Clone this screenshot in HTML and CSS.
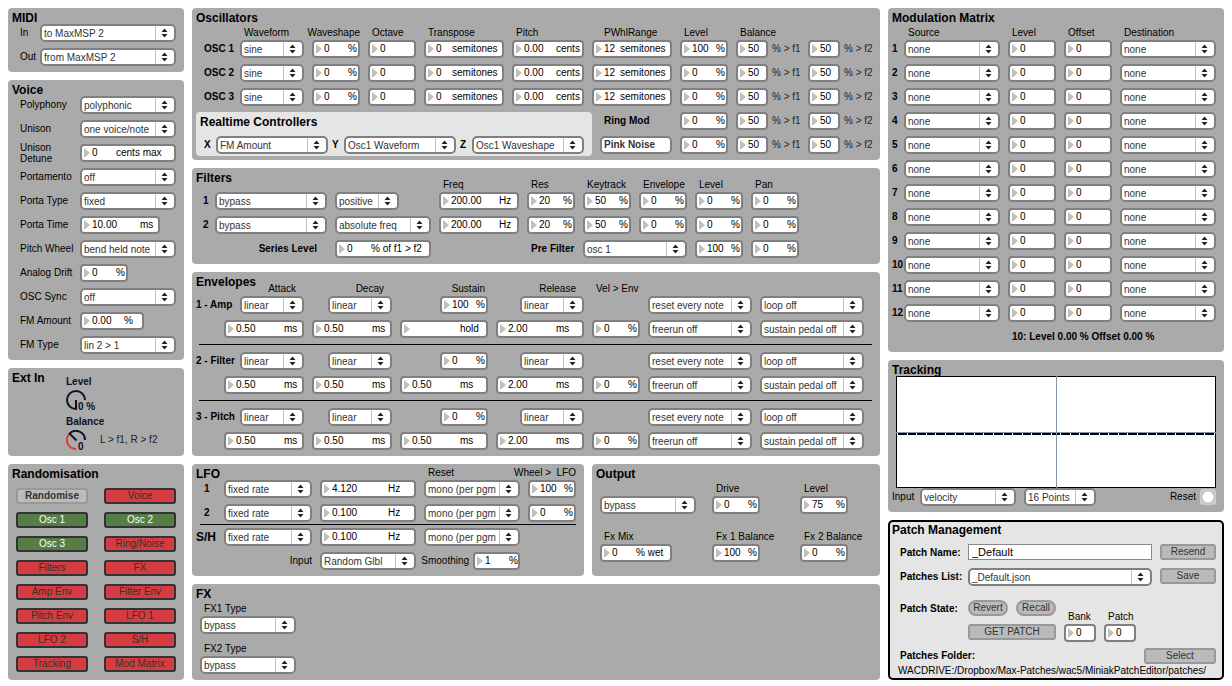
FILE: index.html
```html
<!DOCTYPE html>
<html lang="en">
<head>
<meta charset="utf-8">
<title>Miniak Patch Editor</title>
<link rel="stylesheet" href="styles.css">
</head>
<body>
<main class="editor">

<div class="column">
  <section class="panel">
    <h2>MIDI</h2>
    <div class="body midi">
      <label for="midi-in">In</label><select id="midi-in"><option>to MaxMSP 2</option></select>
      <label for="midi-out">Out</label><select id="midi-out"><option>from MaxMSP 2</option></select>
    </div>
  </section>

  <section class="panel">
    <h2>Voice</h2>
    <div class="body voice">
      <label for="v1">Polyphony</label><select id="v1"><option>polyphonic</option></select>
      <label for="v2">Unison</label><select id="v2"><option>one voice/note</option></select>
      <label for="v3" class="two-line">Unison<br>Detune</label><div class="num u36"><input id="v3" value="0"><span>cents max</span></div>
      <label for="v4">Portamento</label><select id="v4"><option>off</option></select>
      <label for="v5">Porta Type</label><select id="v5"><option>fixed</option></select>
      <label for="v6">Porta Time</label><div class="num u60 w80"><input id="v6" value="10.00"><span>ms</span></div>
      <label for="v7">Pitch Wheel</label><select id="v7"><option>bend held note</option></select>
      <label for="v8">Analog Drift</label><div class="num u36 w48"><input id="v8" value="0"><span>%</span></div>
      <label for="v9">OSC Sync</label><select id="v9"><option>off</option></select>
      <label for="v10">FM Amount</label><div class="num u44 w64"><input id="v10" value="0.00"><span>%</span></div>
      <label for="v11">FM Type</label><select id="v11"><option>lin 2 &gt; 1</option></select>
    </div>
  </section>

  <section class="panel">
    <h2>Ext In</h2>
    <div class="body ext">
      <label for="ext-level">Level</label>
      <div class="dial">
        <svg viewBox="0 0 20 20" width="20" height="20" aria-hidden="true"><path d="M10 10V19A9 9 0 1 1 19 10" fill="none" stroke="#0c1226" stroke-width="2"/></svg>
        <input id="ext-level" type="range" value="0"><output>0 %</output>
      </div>
      <label for="ext-balance">Balance</label>
      <div class="dial">
        <svg viewBox="0 0 20 20" width="20" height="20" aria-hidden="true"><path d="M10 19A9 9 0 0 1 3.6 3.6" fill="none" stroke="#e0383c" stroke-width="2"/><path d="M10.500 10.500L3.600 3.600A9 9 0 0 1 19 10" fill="none" stroke="#0c1226" stroke-width="2"/></svg>
        <input id="ext-balance" type="range" min="-50" max="50" value="0"><output>0</output>
        <span class="route">L &gt; f1, R &gt; f2</span>
      </div>
    </div>
  </section>

  <section class="panel grow">
    <h2>Randomisation</h2>
    <div class="body random">
      <button class="go">Randomise</button><button class="off">Voice</button>
      <button class="on">Osc 1</button><button class="on">Osc 2</button>
      <button class="on">Osc 3</button><button class="off">Ring/Noise</button>
      <button class="off">Filters</button><button class="off">FX</button>
      <button class="off">Amp Env</button><button class="off">Filter Env</button>
      <button class="off">Pitch Env</button><button class="off">LFO 1</button>
      <button class="off">LFO 2</button><button class="off">S/H</button>
      <button class="off">Tracking</button><button class="off">Mod Matrix</button>
    </div>
  </section>
</div>

<div class="column">
  <section class="panel">
    <h2>Oscillators</h2>
    <div class="body osc">
      <span></span><span class="head">Waveform</span><span class="head flush-end">Waveshape</span><span class="head">Octave</span><span class="head">Transpose</span><span class="head">Pitch</span><span class="head indent">PWhlRange</span><span class="head">Level</span><span class="head">Balance</span><span></span>

      <b>OSC 1</b><select aria-label="OSC 1 waveform"><option>sine</option></select>
      <div class="num u36"><input aria-label="OSC 1 waveshape" value="0"><span>%</span></div>
      <div class="num"><input aria-label="OSC 1 octave" value="0"></div>
      <div class="num u28"><input aria-label="OSC 1 transpose" value="0"><span>semitones</span></div>
      <div class="num u44"><input aria-label="OSC 1 pitch" value="0.00"><span>cents</span></div>
      <div class="num u28"><input aria-label="OSC 1 pitch wheel range" value="12"><span>semitones</span></div>
      <div class="num u36"><input aria-label="OSC 1 level" value="100"><span>%</span></div>
      <label class="bal"><span class="num"><input value="50"></span>% &gt; f1</label>
      <label class="bal"><span class="num"><input value="50"></span>% &gt; f2</label>

      <b>OSC 2</b><select aria-label="OSC 2 waveform"><option>sine</option></select>
      <div class="num u36"><input aria-label="OSC 2 waveshape" value="0"><span>%</span></div>
      <div class="num"><input aria-label="OSC 2 octave" value="0"></div>
      <div class="num u28"><input aria-label="OSC 2 transpose" value="0"><span>semitones</span></div>
      <div class="num u44"><input aria-label="OSC 2 pitch" value="0.00"><span>cents</span></div>
      <div class="num u28"><input aria-label="OSC 2 pitch wheel range" value="12"><span>semitones</span></div>
      <div class="num u36"><input aria-label="OSC 2 level" value="0"><span>%</span></div>
      <label class="bal"><span class="num"><input value="50"></span>% &gt; f1</label>
      <label class="bal"><span class="num"><input value="50"></span>% &gt; f2</label>

      <b>OSC 3</b><select aria-label="OSC 3 waveform"><option>sine</option></select>
      <div class="num u36"><input aria-label="OSC 3 waveshape" value="0"><span>%</span></div>
      <div class="num"><input aria-label="OSC 3 octave" value="0"></div>
      <div class="num u28"><input aria-label="OSC 3 transpose" value="0"><span>semitones</span></div>
      <div class="num u44"><input aria-label="OSC 3 pitch" value="0.00"><span>cents</span></div>
      <div class="num u28"><input aria-label="OSC 3 pitch wheel range" value="12"><span>semitones</span></div>
      <div class="num u36"><input aria-label="OSC 3 level" value="0"><span>%</span></div>
      <label class="bal"><span class="num"><input value="50"></span>% &gt; f1</label>
      <label class="bal"><span class="num"><input value="50"></span>% &gt; f2</label>

      <div class="realtime">
        <h3>Realtime Controllers</h3>
        <div class="axes">
          <label for="ax-x">X</label><select id="ax-x"><option>FM Amount</option></select>
          <label for="ax-y">Y</label><select id="ax-y"><option>Osc1 Waveform</option></select>
          <label for="ax-z">Z</label><select id="ax-z"><option>Osc1 Waveshape</option></select>
        </div>
      </div>

      <b class="indent">Ring Mod</b>
      <div class="num u36"><input aria-label="Ring mod level" value="0"><span>%</span></div>
      <label class="bal"><span class="num"><input value="50"></span>% &gt; f1</label>
      <label class="bal"><span class="num"><input value="50"></span>% &gt; f2</label>
      <button class="noise">Pink Noise</button>
      <div class="num u36"><input aria-label="Noise level" value="0"><span>%</span></div>
      <label class="bal"><span class="num"><input value="50"></span>% &gt; f1</label>
      <label class="bal"><span class="num"><input value="50"></span>% &gt; f2</label>
    </div>
  </section>

  <section class="panel">
    <h2>Filters</h2>
    <div class="body filters">
      <span></span><span></span><span></span><span class="head">Freq</span><span class="head">Res</span><span class="head">Keytrack</span><span class="head">Envelope</span><span class="head">Level</span><span class="head">Pan</span>

      <b>1</b><select aria-label="Filter 1 type"><option>bypass</option></select>
      <select aria-label="Filter 1 polarity" class="w64"><option>positive</option></select>
      <div class="num u60"><input aria-label="Filter 1 frequency" value="200.00"><span>Hz</span></div>
      <div class="num u36"><input aria-label="Filter 1 resonance" value="20"><span>%</span></div>
      <div class="num u36"><input aria-label="Filter 1 keytrack" value="50"><span>%</span></div>
      <div class="num u36"><input aria-label="Filter 1 envelope" value="0"><span>%</span></div>
      <div class="num u36"><input aria-label="Filter 1 level" value="0"><span>%</span></div>
      <div class="num u36"><input aria-label="Filter 1 pan" value="0"><span>%</span></div>

      <b>2</b><select aria-label="Filter 2 type"><option>bypass</option></select>
      <select aria-label="Filter 2 mode"><option>absolute freq</option></select>
      <div class="num u60"><input aria-label="Filter 2 frequency" value="200.00"><span>Hz</span></div>
      <div class="num u36"><input aria-label="Filter 2 resonance" value="20"><span>%</span></div>
      <div class="num u36"><input aria-label="Filter 2 keytrack" value="50"><span>%</span></div>
      <div class="num u36"><input aria-label="Filter 2 envelope" value="0"><span>%</span></div>
      <div class="num u36"><input aria-label="Filter 2 level" value="0"><span>%</span></div>
      <div class="num u36"><input aria-label="Filter 2 pan" value="0"><span>%</span></div>

      <label class="series" for="series">Series Level</label>
      <div class="num u36"><input id="series" value="0"><span>% of f1 &gt; f2</span></div>
      <label class="pre" for="prefilter">Pre Filter</label>
      <select id="prefilter"><option>osc 1</option></select>
      <div class="num u36"><input aria-label="Pre filter level" value="100"><span>%</span></div>
      <div class="num u36"><input aria-label="Pre filter pan" value="0"><span>%</span></div>
    </div>
  </section>

  <section class="panel">
    <h2>Envelopes</h2>
    <div class="body env">
      <span></span><span class="head end">Attack</span><span class="head end">Decay</span><span class="head end near">Sustain</span><span class="head end">Release</span><span class="head">Vel &gt; Env</span><span></span><span></span>

      <b>1 - Amp</b>
      <select aria-label="Amp attack curve" class="w64 right"><option>linear</option></select>
      <select aria-label="Amp decay curve" class="w64 right"><option>linear</option></select>
      <div class="num u36 w48 right"><input aria-label="Amp sustain" value="100"><span>%</span></div>
      <select aria-label="Amp release curve" class="w64 right"><option>linear</option></select>
      <span></span>
      <select aria-label="Amp reset"><option>reset every note</option></select>
      <select aria-label="Amp loop"><option>loop off</option></select>
      <span></span>
      <div class="num u60"><input aria-label="Amp attack" value="0.50"><span>ms</span></div>
      <div class="num u60"><input aria-label="Amp decay" value="0.50"><span>ms</span></div>
      <div class="num u60"><input aria-label="Amp sustain time" value=""><span>hold</span></div>
      <div class="num u60"><input aria-label="Amp release" value="2.00"><span>ms</span></div>
      <div class="num u36"><input aria-label="Amp velocity" value="0"><span>%</span></div>
      <select aria-label="Amp freerun"><option>freerun off</option></select>
      <select aria-label="Amp sustain pedal"><option>sustain pedal off</option></select>
      <hr>
      <b>2 - Filter</b>
      <select aria-label="Filter attack curve" class="w64 right"><option>linear</option></select>
      <select aria-label="Filter decay curve" class="w64 right"><option>linear</option></select>
      <div class="num u36 w48 right"><input aria-label="Filter sustain" value="0"><span>%</span></div>
      <select aria-label="Filter release curve" class="w64 right"><option>linear</option></select>
      <span></span>
      <select aria-label="Filter reset"><option>reset every note</option></select>
      <select aria-label="Filter loop"><option>loop off</option></select>
      <span></span>
      <div class="num u60"><input aria-label="Filter attack" value="0.50"><span>ms</span></div>
      <div class="num u60"><input aria-label="Filter decay" value="0.50"><span>ms</span></div>
      <div class="num u60"><input aria-label="Filter sustain time" value="0.50"><span>ms</span></div>
      <div class="num u60"><input aria-label="Filter release" value="2.00"><span>ms</span></div>
      <div class="num u36"><input aria-label="Filter velocity" value="0"><span>%</span></div>
      <select aria-label="Filter freerun"><option>freerun off</option></select>
      <select aria-label="Filter sustain pedal"><option>sustain pedal off</option></select>
      <hr>
      <b>3 - Pitch</b>
      <select aria-label="Pitch attack curve" class="w64 right"><option>linear</option></select>
      <select aria-label="Pitch decay curve" class="w64 right"><option>linear</option></select>
      <div class="num u36 w48 right"><input aria-label="Pitch sustain" value="0"><span>%</span></div>
      <select aria-label="Pitch release curve" class="w64 right"><option>linear</option></select>
      <span></span>
      <select aria-label="Pitch reset"><option>reset every note</option></select>
      <select aria-label="Pitch loop"><option>loop off</option></select>
      <span></span>
      <div class="num u60"><input aria-label="Pitch attack" value="0.50"><span>ms</span></div>
      <div class="num u60"><input aria-label="Pitch decay" value="0.50"><span>ms</span></div>
      <div class="num u60"><input aria-label="Pitch sustain time" value="0.50"><span>ms</span></div>
      <div class="num u60"><input aria-label="Pitch release" value="2.00"><span>ms</span></div>
      <div class="num u36"><input aria-label="Pitch velocity" value="0"><span>%</span></div>
      <select aria-label="Pitch freerun"><option>freerun off</option></select>
      <select aria-label="Pitch sustain pedal"><option>sustain pedal off</option></select>
    </div>
  </section>

  <div class="pair">
    <section class="panel">
      <h2>LFO</h2>
      <div class="body lfo">
        <div class="lfo-rows">
          <span></span><span></span><span></span><span class="head">Reset</span><span class="head wheel">Wheel &gt;&nbsp; LFO</span>
          <b class="lfo-no">1</b><select aria-label="LFO 1 rate mode"><option>fixed rate</option></select>
          <div class="num u68"><input aria-label="LFO 1 rate" value="4.120"><span>Hz</span></div>
          <select aria-label="LFO 1 reset"><option>mono (per pgm</option></select>
          <div class="num u36"><input aria-label="LFO 1 wheel" value="100"><span>%</span></div>
          <b class="lfo-no">2</b><select aria-label="LFO 2 rate mode"><option>fixed rate</option></select>
          <div class="num u68"><input aria-label="LFO 2 rate" value="0.100"><span>Hz</span></div>
          <select aria-label="LFO 2 reset"><option>mono (per pgm</option></select>
          <div class="num u36"><input aria-label="LFO 2 wheel" value="0"><span>%</span></div>
        </div>
        <hr>
        <div class="lfo-rows">
          <h3>S/H</h3><select aria-label="S/H rate mode"><option>fixed rate</option></select>
          <div class="num u68"><input aria-label="S/H rate" value="0.100"><span>Hz</span></div>
          <select aria-label="S/H reset"><option>mono (per pgm</option></select>
          <span></span>
          <span></span><label class="sh-input" for="sh-in">Input</label><select id="sh-in"><option>Random Glbl</option></select>
          <div class="smooth"><label for="smooth">Smoothing</label><div class="num u36 w48"><input id="smooth" value="1"><span>%</span></div></div>
        </div>
      </div>
    </section>

    <section class="panel">
      <h2>Output</h2>
      <div class="body output">
        <select aria-label="Output effect routing" class="w96"><option>bypass</option></select>
        <div class="field"><label for="o1">Drive</label><div class="num u36 w48"><input id="o1" value="0"><span>%</span></div></div>
        <div class="field"><label for="o2">Level</label><div class="num u36 w48"><input id="o2" value="75"><span>%</span></div></div>
        <div class="field"><label for="o3">Fx Mix</label><div class="num u36 w72"><input id="o3" value="0"><span>% wet</span></div></div>
        <div class="field"><label for="o4">Fx 1 Balance</label><div class="num u36 w48"><input id="o4" value="100"><span>%</span></div></div>
        <div class="field"><label for="o5">Fx 2 Balance</label><div class="num u36 w48"><input id="o5" value="0"><span>%</span></div></div>
      </div>
    </section>
  </div>

  <section class="panel grow">
    <h2>FX</h2>
    <div class="body fx">
      <div class="field"><label for="fx1">FX1 Type</label><select id="fx1" class="w96"><option>bypass</option></select></div>
      <div class="field"><label for="fx2">FX2 Type</label><select id="fx2" class="w96"><option>bypass</option></select></div>
    </div>
  </section>
</div>

<div class="column">
  <section class="panel">
    <h2>Modulation Matrix</h2>
    <div class="body matrix">
      <span></span><span class="head">Source</span><span class="head">Level</span><span class="head">Offset</span><span class="head">Destination</span>
      <b>1</b><select aria-label="Source 1"><option>none</option></select><div class="num"><input aria-label="Level 1" value="0"></div><div class="num"><input aria-label="Offset 1" value="0"></div><select aria-label="Destination 1"><option>none</option></select>
      <b>2</b><select aria-label="Source 2"><option>none</option></select><div class="num"><input aria-label="Level 2" value="0"></div><div class="num"><input aria-label="Offset 2" value="0"></div><select aria-label="Destination 2"><option>none</option></select>
      <b>3</b><select aria-label="Source 3"><option>none</option></select><div class="num"><input aria-label="Level 3" value="0"></div><div class="num"><input aria-label="Offset 3" value="0"></div><select aria-label="Destination 3"><option>none</option></select>
      <b>4</b><select aria-label="Source 4"><option>none</option></select><div class="num"><input aria-label="Level 4" value="0"></div><div class="num"><input aria-label="Offset 4" value="0"></div><select aria-label="Destination 4"><option>none</option></select>
      <b>5</b><select aria-label="Source 5"><option>none</option></select><div class="num"><input aria-label="Level 5" value="0"></div><div class="num"><input aria-label="Offset 5" value="0"></div><select aria-label="Destination 5"><option>none</option></select>
      <b>6</b><select aria-label="Source 6"><option>none</option></select><div class="num"><input aria-label="Level 6" value="0"></div><div class="num"><input aria-label="Offset 6" value="0"></div><select aria-label="Destination 6"><option>none</option></select>
      <b>7</b><select aria-label="Source 7"><option>none</option></select><div class="num"><input aria-label="Level 7" value="0"></div><div class="num"><input aria-label="Offset 7" value="0"></div><select aria-label="Destination 7"><option>none</option></select>
      <b>8</b><select aria-label="Source 8"><option>none</option></select><div class="num"><input aria-label="Level 8" value="0"></div><div class="num"><input aria-label="Offset 8" value="0"></div><select aria-label="Destination 8"><option>none</option></select>
      <b>9</b><select aria-label="Source 9"><option>none</option></select><div class="num"><input aria-label="Level 9" value="0"></div><div class="num"><input aria-label="Offset 9" value="0"></div><select aria-label="Destination 9"><option>none</option></select>
      <b>10</b><select aria-label="Source 10"><option>none</option></select><div class="num"><input aria-label="Level 10" value="0"></div><div class="num"><input aria-label="Offset 10" value="0"></div><select aria-label="Destination 10"><option>none</option></select>
      <b>11</b><select aria-label="Source 11"><option>none</option></select><div class="num"><input aria-label="Level 11" value="0"></div><div class="num"><input aria-label="Offset 11" value="0"></div><select aria-label="Destination 11"><option>none</option></select>
      <b>12</b><select aria-label="Source 12"><option>none</option></select><div class="num"><input aria-label="Level 12" value="0"></div><div class="num"><input aria-label="Offset 12" value="0"></div><select aria-label="Destination 12"><option>none</option></select>
      <b class="status">10: Level 0.00 % Offset 0.00 %</b>
    </div>
  </section>

  <section class="panel">
    <h2>Tracking</h2>
    <div class="body tracking">
      <svg class="graph" viewBox="0 0 320 112" preserveAspectRatio="none" role="img" aria-label="Tracking curve">
        <rect x=".5" y=".5" width="319" height="111" fill="#fff" stroke="#000"/>
        <path d="M2 58H318" stroke="#000" stroke-width="2" stroke-dasharray="8.600 1"/>
        <path d="M0 56.500H320M160.500 0V112" stroke="#8497a8"/>
      </svg>
      <div class="track-row">
        <label class="track-in" for="tr-in">Input</label><select id="tr-in" class="w96"><option>velocity</option></select>
        <select aria-label="Points" class="w72"><option>16 Points</option></select>
        <label class="reset" for="tr-reset">Reset</label><button id="tr-reset" class="bang" aria-label="Reset"></button>
      </div>
    </div>
  </section>

  <section class="panel patch grow">
    <h2>Patch Management</h2>
    <div class="body patch-body">
      <div class="patch-form">
        <label for="p-name">Patch Name:</label><input id="p-name" class="text" value="_Default"><button>Resend</button>
        <label for="p-list">Patches List:</label><select id="p-list"><option>_Default.json</option></select><button>Save</button>
      </div>
      <div class="state">
        <b>Patch State:</b>
        <div class="state-buttons"><button class="pill">Revert</button><button class="pill">Recall</button><button class="get">GET PATCH</button></div>
        <div class="field"><label for="bank">Bank</label><div class="num w32"><input id="bank" value="0"></div></div>
        <div class="field"><label for="patch">Patch</label><div class="num w32"><input id="patch" value="0"></div></div>
      </div>
      <div class="folder"><b>Patches Folder:</b><button class="w72">Select</button></div>
      <p class="path">WACDRIVE:/Dropbox/Max-Patches/wac5/MiniakPatchEditor/patches/</p>
    </div>
  </section>
</div>

</main>
</body>
</html>
```
FILE: styles.css
```css
* { box-sizing: border-box; }

body {
  margin: 8px;
  background: #fff;
  color: #000;
  font: 10px/12px "Liberation Sans", Arial, sans-serif;
}

h2, h3, p, hr { margin: 0; }
h2, h3 { font-size: 12px; line-height: 12px; font-weight: bold; }

/* Page frame: three columns of panels */
.editor {
  display: grid;
  grid-template-columns: minmax(176px, 11fr) minmax(688px, 43fr) minmax(336px, 21fr);
  gap: 8px;
}
.column { display: flex; flex-direction: column; gap: 8px; min-width: 0; }
.grow { flex: 1; }
.pair { display: grid; grid-template-columns: minmax(392px, 49fr) minmax(288px, 36fr); gap: 8px; }

/* The title shares its cell with the body, whose top padding clears it */
.panel { display: grid; background: #aaa; border-radius: 4px; align-items: start; }
.panel > h2 { grid-area: 1 / 1; padding: 4px 4px 0; justify-self: start; }
.panel > .body { grid-area: 1 / 1; }

/* Controls */
select, input, button { font: inherit; color: inherit; margin: 0; }

select {
  appearance: none;
  display: block;
  width: 100%;
  height: 18px;
  padding: 1px 20px 0 2px;
  border: 2px solid #808080;
  border-radius: 5px;
  color: #333;
  background: #fff url("data:image/svg+xml,%3Csvg xmlns='http://www.w3.org/2000/svg' width='19' height='14'%3E%3Cpath d='M0 0h1v14H0z' fill='%23c0c0c0'/%3E%3Cpath d='M6.500 6L9.500 2.500L12.500 6zM6.500 8L9.500 11.500L12.500 8z' fill='%23222'/%3E%3C/svg%3E") no-repeat right center;
}

.num {
  display: flex;
  align-items: center;
  height: 18px;
  padding-left: 2px;
  border: 2px solid #808080;
  border-radius: 4px;
  background: #fff;
  white-space: nowrap;
}
.num::before {
  content: "";
  border: solid transparent;
  border-width: 5px 0 5px 6px;
  border-left-color: #c0c0c0;
}
.num input {
  flex: 1;
  min-width: 0;
  width: 0;
  height: 14px;
  margin-left: 2px;
  padding: 0 0 1px;
  border: 0;
  background: none;
}
.num.u28 input { flex: none; width: 16px; }
.num.u36 input { flex: none; width: 24px; }
.num.u44 input { flex: none; width: 32px; }
.num.u60 input { flex: none; width: 48px; }
.num.u68 input { flex: none; width: 56px; }

.w32 { width: 32px; }
.w48 { width: 48px; }
.w64 { width: 64px; }
.w72 { width: 72px; }
.w80 { width: 80px; }
.w96 { width: 96px; }
.right { justify-self: end; }

button {
  height: 16px;
  padding: 0;
  border: 2px solid #999;
  border-radius: 3px;
  background: #bbb;
  color: #333;
  line-height: 12px;
}

.head { line-height: 14px; padding-left: 4px; white-space: nowrap; }
.indent { padding-left: 12px; }
b { white-space: nowrap; }

.field { display: flex; flex-direction: column; }
.field label { line-height: 14px; padding-left: 4px; white-space: nowrap; }

/* MIDI and Voice */
.midi, .voice {
  display: grid;
  row-gap: 6px;
  align-items: center;
  padding: 16px 8px 6px 12px;
}
.midi { grid-template-columns: 20px 1fr; }
.voice { grid-template-columns: 60px 1fr; grid-auto-rows: 18px; }
.two-line { line-height: 11px; }

/* Ext In */
.ext {
  display: flex;
  flex-direction: column;
  padding: 8px 8px 6px 58px;
  color: #0c1226;
}
.ext label { font-weight: bold; line-height: 12px; }
.dial { position: relative; display: flex; align-items: center; height: 20px; margin: 2px 0 6px; }
.dial:last-child { margin-bottom: 0; }
.dial input { position: absolute; left: 0; top: 0; width: 20px; height: 20px; opacity: 0; }
.dial output { position: absolute; left: 12px; top: 11px; font-weight: bold; }
.route { margin-left: 14px; color: #222; }

/* Randomisation */
.random {
  display: grid;
  grid-template-columns: 72px 72px;
  justify-content: space-between;
  gap: 8px;
  padding: 24px 8px 8px;
}
.random .on, .random .off { border-color: #333; }
.random .on { background: #567d46; color: #fff; }
.random .off { background: #d53b3f; }
.random .go { font-weight: bold; }

/* Oscillators */
.osc {
  display: grid;
  grid-template-columns: 28px 64px 48px 48px 80px 72px 80px 48px 64px 64px;
  column-gap: 8px;
  grid-template-rows: 14px repeat(5, 18px);
  row-gap: 6px;
  align-items: center;
  padding: 12px 8px 6px 12px;
}
.osc .head { align-self: end; margin-bottom: -6px; }
.flush-end { justify-self: end; padding-left: 0; }
.osc .head.indent { padding-left: 12px; }
.bal { display: flex; align-items: center; gap: 4px; white-space: nowrap; color: #222; }
.bal .num { flex: none; width: 32px; color: #000; }
.realtime {
  grid-area: 5 / 1 / 7 / 7;
  align-self: start;
  margin: 0 -8px;
  padding: 4px 4px 2px;
  border-radius: 4px;
  background: #e5e5e5;
}
.axes {
  display: grid;
  grid-template-columns: 12px 112px 16px 112px 16px 112px;
  align-items: center;
  padding: 8px 0 0 4px;
  font-weight: bold;
}
.axes label + select { font-weight: normal; }
.axes select + label { padding-left: 4px; }
.noise {
  height: 18px;
  margin-left: 8px;
  padding-left: 2px;
  border-color: #808080;
  border-radius: 5px;
  background: #fff;
  font-weight: bold;
  text-align: left;
}

/* Filters */
.filters {
  display: grid;
  grid-template-columns: 4px 112px 96px 80px repeat(5, 48px);
  column-gap: 8px;
  row-gap: 6px;
  align-items: center;
  padding: 10px 8px 6px 11px;
}
.filters .head, .env .head, .matrix .head, .lfo .head { margin-bottom: -6px; }
.series { grid-column: 1 / 3; justify-self: end; margin-right: 10px; font-weight: bold; }
.pre { grid-column: 5; padding-left: 4px; font-weight: bold; white-space: nowrap; }
#prefilter { grid-column: 6 / 8; }

/* Envelopes */
.env {
  display: grid;
  grid-template-columns: 20px 80px 80px 88px 88px 48px 104px 104px;
  column-gap: 8px;
  row-gap: 6px;
  align-items: center;
  padding: 10px 8px 6px 4px;
}
.env .end { justify-self: end; padding-right: 8px; }
.env .near { padding-right: 3px; }
hr { border: 0; border-top: 1px solid #000; }
.env hr { grid-column: 1 / -1; height: 2px; margin: 0 -8px 0 3px; }

/* LFO */
.lfo { padding: 2px 8px 6px 4px; }
.lfo-rows {
  display: grid;
  grid-template-columns: 20px 88px 96px 96px 48px;
  column-gap: 8px;
  row-gap: 6px;
  align-items: center;
}
.lfo-no { padding-left: 8px; }
.wheel { justify-self: end; }
.lfo hr { margin: 2px 0 3px 4px; }
.sh-input { justify-self: end; }
.smooth { display: flex; align-items: center; justify-content: flex-end; gap: 4px; }

/* Output and FX */
.output {
  display: grid;
  grid-template-columns: 112px 88px auto;
  justify-content: start;
  row-gap: 16px;
  align-items: end;
  padding: 18px 8px 14px;
}
.fx { display: flex; flex-direction: column; gap: 8px; padding: 18px 8px 6px; }

/* Modulation matrix */
.matrix {
  display: grid;
  grid-template-columns: 4px 96px 48px 48px 96px;
  column-gap: 8px;
  row-gap: 6px;
  align-items: center;
  padding: 18px 8px 6px 4px;
}
.status { grid-column: 3 / -1; padding-left: 4px; line-height: 18px; }

/* Tracking */
.tracking { padding: 16px 8px 6px; }
.graph { display: block; width: 100%; height: 112px; shape-rendering: crispEdges; }
.track-row { display: flex; align-items: center; gap: 8px; }
.track-in { flex: none; width: 20px; margin-left: -4px; }
.reset { margin-left: auto; }
.bang {
  width: 16px;
  margin-left: -4px;
  border: 0;
  border-radius: 3px;
  background: radial-gradient(circle, #fff 5px, #bbb 6px, #ccc 7px);
}

/* Patch management */
.patch { background: #e5e5e5; box-shadow: inset 0 0 0 2px #000; border-radius: 5px; }
.patch-body { padding: 24px 8px 2px 12px; }
.patch-form {
  display: grid;
  grid-template-columns: 60px 1fr 56px;
  column-gap: 8px;
  grid-auto-rows: 18px;
  row-gap: 6px;
  align-items: start;
}
.patch-form label, .state b { font-weight: bold; line-height: 17px; white-space: nowrap; }
.text {
  width: 100%;
  height: 16px;
  padding: 0 3px;
  border: 1px solid #888;
  background: #fff;
  font-size: 11px;
}
.state { display: flex; gap: 8px; align-items: flex-end; min-height: 42px; margin-top: 14px; }
.state b { width: 60px; align-self: flex-start; }
.state-buttons { display: grid; grid-template-columns: 40px 40px; gap: 8px; align-self: flex-start; }
.pill { border-radius: 8px; }
.get { grid-column: 1 / -1; }
.folder { display: flex; justify-content: space-between; align-items: center; margin-top: 6px; }
.path { margin: 0 0 0 -2px; line-height: 14px; }
```
